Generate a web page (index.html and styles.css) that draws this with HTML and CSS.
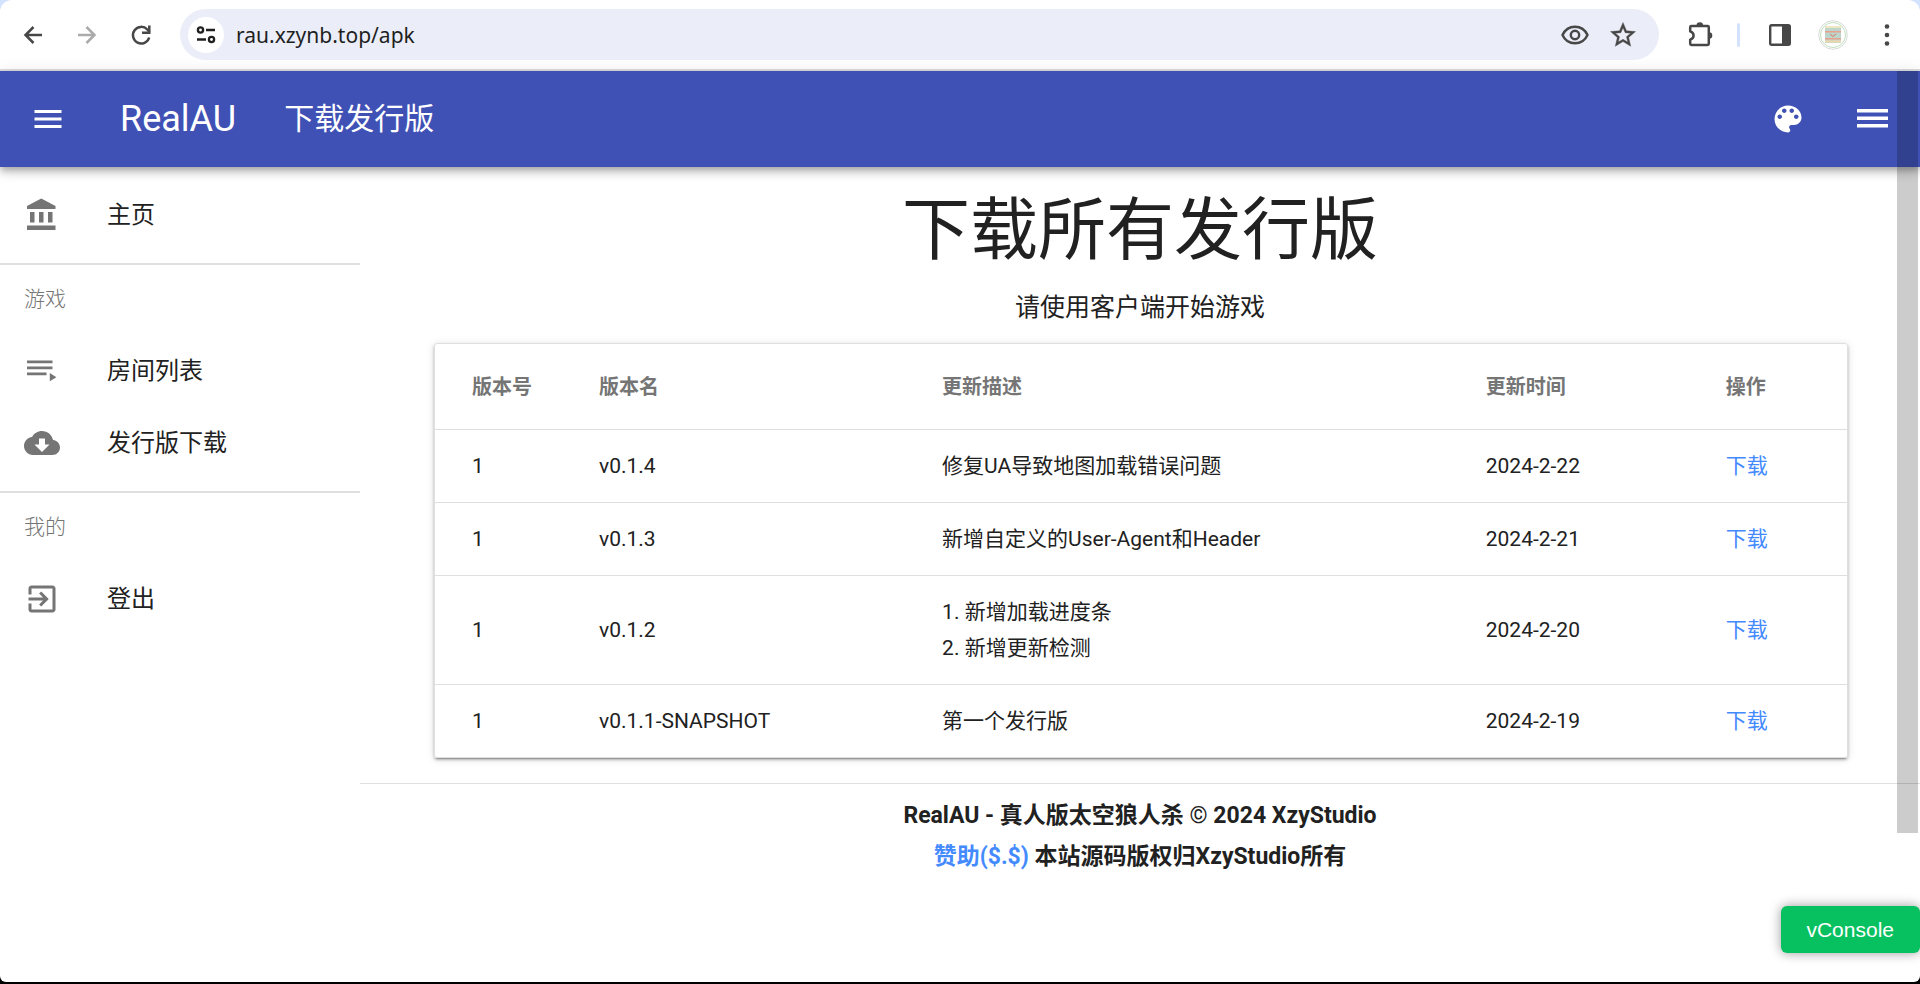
FILE: index.html
```html
<!DOCTYPE html>
<html lang="zh-CN">
<head>
<meta charset="utf-8">
<title>下载发行版 - RealAU</title>
<link rel="stylesheet" href="styles.css">
</head>
<body>
<div class="window">
  <div class="toolbar">
    <div class="nav">
      <button class="tool" aria-label="后退"><svg width="24" height="24" viewBox="0 0 24 24"><path d="M21 12H5M12.500 4l-8 8 8 8" fill="none" stroke="#474747" stroke-width="2.5"/></svg></button>
      <button class="tool" aria-label="前进"><svg width="24" height="24" viewBox="0 0 24 24"><path d="M3 12h16M11.500 4l8 8-8 8" fill="none" stroke="#ababab" stroke-width="2.5"/></svg></button>
      <button class="tool" aria-label="重新加载"><svg width="24" height="24" viewBox="0 0 24 24"><path d="M20.200 14.500A8.300 8.300 0 1 1 18.300 6.500L20.500 9" fill="none" stroke="#474747" stroke-width="2.500"/><path d="M20.300 2.500V9.700H13" fill="none" stroke="#474747" stroke-width="2.500"/></svg></button>
    </div>
    <div class="omnibox">
      <button class="site" aria-label="网站信息"><svg width="20" height="18" viewBox="0 0 20 18" fill="none" stroke="#1f1f1f" stroke-width="2.300"><circle cx="4.500" cy="4" r="2.600"/><path d="M10 4h9M1 13.500h9"/><circle cx="15.500" cy="13.500" r="2.600"/></svg></button>
      <input class="url" type="text" aria-label="地址" value="rau.xzynb.top/apk">
      <button class="tool" aria-label="查看"><svg width="30" height="24" viewBox="0 0 30 24" fill="none" stroke="#474747" stroke-width="2.400"><path d="M2.500 12C5 6.500 9.500 3.700 15 3.700S25 6.500 27.500 12C25 17.500 20.500 20.300 15 20.300S5 17.500 2.500 12z"/><circle cx="15" cy="12" r="4.200"/></svg></button>
      <button class="tool" aria-label="收藏"><svg width="30" height="30" viewBox="0 0 24 24" fill="#474747" stroke="#474747" stroke-width=".3"><path d="M22 9.240l-7.190-.62L12 2 9.190 8.630 2 9.240l5.460 4.730L5.820 21 12 17.270 18.180 21l-1.630-7.030L22 9.240zM12 15.400l-3.760 2.270 1-4.280-3.320-2.880 4.380-.38L12 6.100l1.710 4.040 4.380.38-3.320 2.880 1 4.280L12 15.400z"/></svg></button>
    </div>
    <div class="extras">
      <button class="tool" aria-label="扩展程序"><svg width="26" height="28" viewBox="0 0 26 28"><path d="M2.200 6.200Q2.200 5 3.400 5H19.600Q20.800 5 20.800 6.200V22.800Q20.800 24 19.600 24H3.400Q2.200 24 2.200 22.800V18.600Q5.600 17.500 5.600 14.500T2.200 10.400z" fill="none" stroke="#474747" stroke-width="2.500" stroke-linejoin="round"/><path d="M8.500 4.500a3.300 3.300 0 0 1 6.600 0zM21 11.200a3.300 3.300 0 0 1 0 6.600z" fill="#474747"/></svg></button>
      <span class="sep"></span>
      <button class="tool" aria-label="侧边栏"><svg width="22" height="22" viewBox="0 0 22 22"><rect x="1.200" y="1.200" width="19.600" height="19.600" rx="1.500" fill="none" stroke="#474747" stroke-width="2.400"/><path d="M13 1h8v20h-8z" fill="#474747"/></svg></button>
      <button class="tool" aria-label="个人资料"><svg width="30" height="30" viewBox="0 0 30 30"><circle cx="15" cy="15" r="14.300" fill="#fff" stroke="#d8dad8"/><circle cx="15" cy="15" r="12.500" fill="none" stroke="#bfe0bd"/><path d="M7 6h16v17H7z" fill="#bcd6cb"/><path d="M7 6h16v2H7z" fill="#efe6c2"/><path d="M7 11h16v1.500H7zM7 18h16v1.500H7z" fill="#e9a08c"/><path d="M7 20.500h16v2H7z" fill="#f1d7ae"/><path d="M12 14l3 2.500 3-2.500" fill="none" stroke="#d97862"/></svg></button>
      <button class="tool" aria-label="更多"><svg width="6" height="22" viewBox="0 0 6 22" fill="#474747"><circle cx="3" cy="2.500" r="2.300"/><circle cx="3" cy="11" r="2.300"/><circle cx="3" cy="19.500" r="2.300"/></svg></button>
    </div>
  </div>

  <div class="page">
    <header class="appbar">
      <button class="tool" aria-label="菜单"><svg width="36" height="36" viewBox="0 0 24 24" fill="#fff"><path d="M3 18h18v-2H3v2zm0-5h18v-2H3v2zm0-7v2h18V6H3z"/></svg></button>
      <a class="brand" href="#">RealAU</a>
      <a class="heading" href="#">下载发行版</a>
      <div class="actions">
        <button class="tool" aria-label="主题"><svg width="36" height="36" viewBox="0 0 24 24" fill="#fff"><path d="M12 3c-4.970 0-9 4.030-9 9s4.030 9 9 9c.83 0 1.500-.67 1.500-1.500 0-.39-.15-.74-.39-1.010-.23-.26-.38-.61-.38-.99 0-.83.67-1.500 1.500-1.500H16c2.760 0 5-2.240 5-5 0-4.420-4.030-8-9-8zm-5.500 9c-.83 0-1.500-.67-1.500-1.500S5.670 9 6.500 9 8 9.670 8 10.500 7.330 12 6.500 12zm3-4C8.670 8 8 7.330 8 6.500S8.670 5 9.500 5s1.500.67 1.500 1.500S10.330 8 9.500 8zm5 0c-.83 0-1.500-.67-1.500-1.500S13.670 5 14.500 5s1.500.67 1.500 1.500S15.330 8 14.500 8zm3 4c-.83 0-1.500-.67-1.500-1.500S16.670 9 17.500 9s1.500.67 1.500 1.500-.67 1.500-1.500 1.500z"/></svg></button>
        <button class="tool" aria-label="更多菜单"><svg width="31" height="20" viewBox="0 0 31 20" fill="#fff"><path d="M0 0h31v3.500H0zM0 7.500h31v3.500H0zM0 15h31v3.500H0z"/></svg></button>
      </div>
    </header>

    <div class="body">
      <nav class="drawer">
        <a class="item" href="#"><svg class="icon" width="36" height="36" viewBox="0 0 24 24"><path d="M4 10v7h3v-7H4zm6 0v7h3v-7h-3zM2 22h19v-3H2v3zm14-12v7h3v-7h-3zm-4.500-9L2 6v2h19V6l-9.500-5z"/></svg>主页</a>
        <hr class="line">
        <div class="sub">游戏</div>
        <a class="item" href="#"><svg class="icon" width="36" height="36" viewBox="0 0 24 24"><path d="M2 5h17v1.800H2zM2 9h17v1.800H2zM2 13h13v1.800H2zM17.200 13.400l4.400 2.700-4.400 2.700z"/></svg>房间列表</a>
        <a class="item" href="#"><svg class="icon" width="36" height="36" viewBox="0 0 24 24"><path d="M19.350 10.040C18.670 6.590 15.640 4 12 4 9.110 4 6.600 5.640 5.350 8.040 2.340 8.360 0 10.910 0 14c0 3.310 2.690 6 6 6h13c2.760 0 5-2.240 5-5 0-2.640-2.050-4.780-4.650-4.960zM17 13l-5 5-5-5h3V9h4v4h3z"/></svg>发行版下载</a>
        <hr class="line">
        <div class="sub">我的</div>
        <a class="item" href="#"><svg class="icon" width="36" height="36" viewBox="0 0 24 24"><path d="M10.090 15.590L11.500 17l5-5-5-5-1.410 1.410L12.670 11H3v2h9.670l-2.580 2.590zM19 3H5c-1.110 0-2 .9-2 2v4h2V5h14v14H5v-4H3v4c0 1.100.89 2 2 2h14c1.100 0 2-.9 2-2V5c0-1.100-.9-2-2-2z"/></svg>登出</a>
      </nav>

      <main class="content">
        <h1 class="title">下载所有发行版</h1>
        <p class="lead">请使用客户端开始游戏</p>
        <div class="card">
          <table class="table">
            <colgroup><col class="c1"><col class="c2"><col class="c3"><col class="c4"><col></colgroup>
            <thead><tr><th>版本号</th><th>版本名</th><th>更新描述</th><th>更新时间</th><th>操作</th></tr></thead>
            <tbody>
              <tr><td>1</td><td>v0.1.4</td><td>修复UA导致地图加载错误问题</td><td>2024-2-22</td><td><a class="link" href="#">下载</a></td></tr>
              <tr><td>1</td><td>v0.1.3</td><td>新增自定义的User-Agent和Header</td><td>2024-2-21</td><td><a class="link" href="#">下载</a></td></tr>
              <tr><td>1</td><td>v0.1.2</td><td>1. 新增加载进度条<br>2. 新增更新检测</td><td>2024-2-20</td><td><a class="link" href="#">下载</a></td></tr>
              <tr><td>1</td><td>v0.1.1-SNAPSHOT</td><td>第一个发行版</td><td>2024-2-19</td><td><a class="link" href="#">下载</a></td></tr>
            </tbody>
          </table>
        </div>
        <footer class="footer">
          <div>RealAU - 真人版太空狼人杀 <span class="mark">©</span> 2024 XzyStudio</div>
          <div><a class="link" href="#">赞助($.$)</a> 本站源码版权归XzyStudio所有</div>
        </footer>
      </main>
    </div>
    <div class="thumb"></div>
    <button class="vconsole">vConsole</button>
  </div>
</div>
</body>
</html>
```

FILE: styles.css
```css
* { box-sizing: border-box; }
body {
  margin: 0;
  background: #000;
  color: #212121;
  font-family: Roboto, "Noto Sans CJK SC", sans-serif;
  font-size: 21px;
}
a { color: inherit; text-decoration: none; }
.window {
  display: flex;
  flex-direction: column;
  height: calc(100vh - 2px);
  background: linear-gradient(#d3e3fd 50%, #000 50%);
}
.toolbar {
  display: flex;
  align-items: center;
  height: 71px;
  padding: 0 30px 0 21px;
  border-bottom: 2px solid #dedede;
  border-radius: 12px 12px 0 0;
  background: #fff;
}
.tool {
  display: flex;
  padding: 0;
  border: 0;
  background: none;
}
.nav { display: flex; gap: 30px; margin-right: 27px; }
.omnibox {
  flex: 1;
  display: flex;
  align-items: center;
  height: 51px;
  padding: 0 21px 0 8px;
  border-radius: 26px;
  background: #ebeef8;
}
.omnibox .tool + .tool { margin-left: 18px; }
.site {
  display: flex;
  align-items: center;
  justify-content: center;
  width: 36px;
  height: 36px;
  padding: 0;
  border: 0;
  border-radius: 50%;
  background: #fff;
}
.url {
  flex: 1;
  min-width: 0;
  padding: 0 0 0 12px;
  border: 0;
  background: none;
  color: #1f1f1f;
  font: 21px/28px "Noto Sans", sans-serif;
}
.extras { display: flex; align-items: center; margin-left: 29px; }
.sep {
  width: 3px;
  height: 24px;
  margin: 0 29px 0 23px;
  border-radius: 2px;
  background: #d3e3fd;
}
.extras .tool + .tool { margin-left: 27px; }
.extras .tool:last-child { margin-left: 36px; }

.page {
  position: relative;
  flex: 1;
  display: flex;
  flex-direction: column;
  min-height: 0;
  border-radius: 0 0 6px 6px;
  background: #fff;
}
.appbar {
  position: relative;
  display: flex;
  align-items: center;
  height: 96px;
  padding: 0 32px 0 30px;
  background: #3f51b5;
  color: #fff;
  line-height: 48px;
  box-shadow: 0 3px 6px -1px rgba(0,0,0,.2), 0 6px 8px rgba(0,0,0,.14), 0 2px 15px rgba(0,0,0,.12);
}
.brand { margin-left: 54px; font-size: 36px; }
.heading { margin-left: 48px; font-size: 30px; }
.actions { display: flex; align-items: center; gap: 51px; margin-left: auto; }

.body { flex: 1; display: flex; min-height: 0; }
.drawer { width: 360px; padding-top: 12px; }
.item {
  display: flex;
  align-items: center;
  gap: 47px;
  height: 72px;
  padding-left: 24px;
  font-size: 24px;
  line-height: 36px;
}
.icon { fill: #757575; }
.line { height: 2px; margin: 12px 0 0; border: 0; background: #dfdfdf; }
.sub {
  height: 70px;
  padding-left: 24px;
  color: #757575;
  font-weight: 300;
  line-height: 68px;
}

.content { flex: 1; text-align: center; }
.title { margin: 14px 0 0; font-size: 68px; font-weight: 400; line-height: 100px; }
.lead { margin: 7px 0 15px; font-size: 25px; line-height: 40px; }
.card {
  margin: 0 72px 0 74px;
  border: 1px solid #dfdfdf;
  border-radius: 3px;
  box-shadow: 0 3px 1px -2px rgba(0,0,0,.2), 0 2px 3px rgba(0,0,0,.25), 0 1px 8px rgba(0,0,0,.12);
}
.table {
  width: 100%;
  border-collapse: collapse;
  table-layout: fixed;
  text-align: left;
  line-height: 36px;
}
.c1 { width: 164px; }
.c2 { width: 24.3%; }
.c3 { width: 38.5%; }
.c4 { width: 17%; }
.table th { height: 85px; padding: 2px 0 0; color: #757575; font-size: 20px; font-weight: 700; }
.table td { padding: 18px 0; border-top: 1px solid #dfdfdf; }
.table th:first-child, .table td:first-child { padding-left: 37px; }
.link { color: #448aff; }
.footer {
  margin-top: 25px;
  padding-top: 11px;
  border-top: 1px solid #dfdfdf;
  font-size: 23px;
  font-weight: 700;
  line-height: 41px;
}
.mark { font-weight: 400; }
.thumb {
  position: absolute;
  top: 0;
  right: 2px;
  width: 21px;
  height: 762px;
  background: rgba(0,0,0,.2);
}
.vconsole {
  position: absolute;
  right: 0;
  bottom: 29px;
  padding: 12px 26px 12px 25px;
  border: 0;
  border-radius: 6px;
  background: #07c160;
  color: #fff;
  font: 21px/23px "Liberation Sans", sans-serif;
  box-shadow: 0 0 12px rgba(0,0,0,.4);
}
```
